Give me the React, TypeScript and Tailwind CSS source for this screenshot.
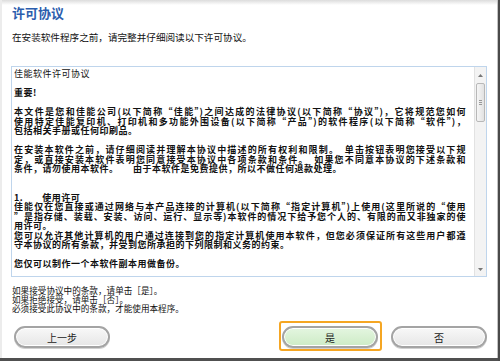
import React from "react";

const J = "text-justify [text-align-last:justify] whitespace-nowrap";

function Line({ children, j = true, b = true }: { children?: React.ReactNode; j?: boolean; b?: boolean }) {
  return (
    <div className={`${j ? J : "whitespace-nowrap"} ${b ? "font-bold" : ""} h-[9.5px] leading-[9.5px]`}>
      {children ?? "\u00a0"}
    </div>
  );
}

function Btn({ label, green }: { label: string; green?: boolean }) {
  return (
    <div
      className={`w-[96px] h-[22px] rounded-full border-[2px] border-[#a4a4a4] shadow-[inset_0_0_0_1px_#ffffff,0_1px_0_#d0d0d0] flex items-center justify-center text-[10px] text-[#222] ${
        green ? "bg-gradient-to-b from-[#e4f6e0] to-[#cdebc6]" : "bg-gradient-to-b from-[#f8f8f8] to-[#e6e6e6]"
      }`}
    >
      {label}
    </div>
  );
}

export default function App() {
  return (
    <div className="w-[500px] h-[361px] bg-white flex font-['Noto_Sans_CJK_SC','Noto_Sans',sans-serif] text-[#111] overflow-hidden">
      <div className="flex-1 flex flex-col border-b-[3px] border-[#505050]">
        <div className="flex-1 flex flex-col bg-gradient-to-b from-[#dcdcdc] via-[#ffffff] to-[#ffffff] [background-size:100%_10px] bg-no-repeat border-l-[2px] border-[#ececec] border-r border-r-[#c4c4c4]">
          <div className="pl-[10px] pt-[5px] text-[13px] leading-[16px] font-bold text-[#2b5dad]">许可协议</div>
          <div className="pl-[10px] mt-[10px] text-[9.6px] leading-[12px]">在安装软件程序之前，请完整并仔细阅读以下许可协议。</div>
          <div className="ml-[9px] mr-[10px] mt-[23px] h-[211px] border border-[#bfd5ec] flex">
            <div className="flex-1 pl-[2px] pr-[8px] pt-[2px] text-[9px] tracking-[0.5px] overflow-hidden">
              <Line j={false} b={false}>佳能软件许可协议</Line>
              <Line />
              <Line j={false}>重要!</Line>
              <Line />
              <Line>本文件是您和佳能公司(以下简称“佳能”)之间达成的法律协议(以下简称“协议”)，它将规范您如何</Line>
              <Line>使用特定佳能复印机、打印机和多功能外围设备(以下简称“产品”)的软件程序(以下简称“软件”)，</Line>
              <Line j={false}>包括相关手册或任何印刷品。</Line>
              <Line />
              <Line>在安装本软件之前，请仔细阅读并理解本协议中描述的所有权利和限制。　单击按钮表明您接受以下规</Line>
              <Line>定，或直接安装本软件表明您同意接受本协议中各项条款和条件。　如果您不同意本协议的下述条款和</Line>
              <Line j={false}>条件，请勿使用本软件。　　由于本软件是免费提供，所以不做任何退款处理。</Line>
              <Line />
              <Line />
              <Line j={false}>1.　　使用许可</Line>
              <Line>佳能仅在您直接或通过网络与本产品连接的计算机(以下简称“指定计算机”)上使用(这里所说的“使用</Line>
              <Line>”是指存储、装载、安装、访问、运行、显示等)本软件的情况下给予您个人的、有限的而又非独家的使</Line>
              <Line j={false}>用许可。</Line>
              <Line>您可以允许其他计算机的用户通过连接到您的指定计算机使用本软件，但您必须保证所有这些用户都遵</Line>
              <Line j={false}>守本协议的所有条款，并受到您所承担的下列限制和义务的约束。</Line>
              <Line />
              <Line j={false}>您仅可以制作一个本软件副本用做备份。</Line>
            </div>
            <div className="w-[12px] bg-[#f3f3f3] border-l border-[#e2e2e2] flex flex-col items-center py-[2px]">
              <div className="h-[12px] w-full flex items-center justify-center">
                <svg width="5" height="3" viewBox="0 0 5 3"><path d="M0 3 L2.5 0 L5 3 Z" fill="#777" /></svg>
              </div>
              <div className="mt-[2px] h-[39px] w-[9px] rounded-[2px] border border-[#b8b8b8] bg-gradient-to-r from-[#f6f6f6] to-[#e2e2e2] flex flex-col items-center justify-center gap-[1px]">
                <div className="w-[3px] h-px bg-[#999]" />
                <div className="w-[3px] h-px bg-[#999]" />
                <div className="w-[3px] h-px bg-[#999]" />
              </div>
              <div className="flex-1" />
              <div className="h-[10px] w-full flex items-center justify-center">
                <svg width="5" height="3" viewBox="0 0 5 3"><path d="M0 0 L2.5 3 L5 0 Z" fill="#777" /></svg>
              </div>
            </div>
          </div>
          <div className="pl-[10px] mt-[9px] text-[8.6px] leading-[9px]">
            <div>如果接受协议中的条款，请单击［是］。</div>
            <div>如果拒绝接受，请单击［否］。</div>
            <div>必须接受此协议中的条款，才能使用本程序。</div>
          </div>
          <div className="mt-[13px] pl-[12px] pr-[10px] flex items-center">
            <Btn label="上一步" />
            <div className="flex-1" />
            <div className="relative">
              <div className="absolute -left-[3px] -right-[4px] -top-[5px] -bottom-[3px] border-[2px] border-[#f5a623] rounded-[3px]" />
              <Btn label="是" green />
            </div>
            <div className="w-[13px]" />
            <Btn label="否" />
          </div>
        </div>
      </div>
      <div className="w-[2px] bg-[#4a4a4a]" />
    </div>
  );
}
